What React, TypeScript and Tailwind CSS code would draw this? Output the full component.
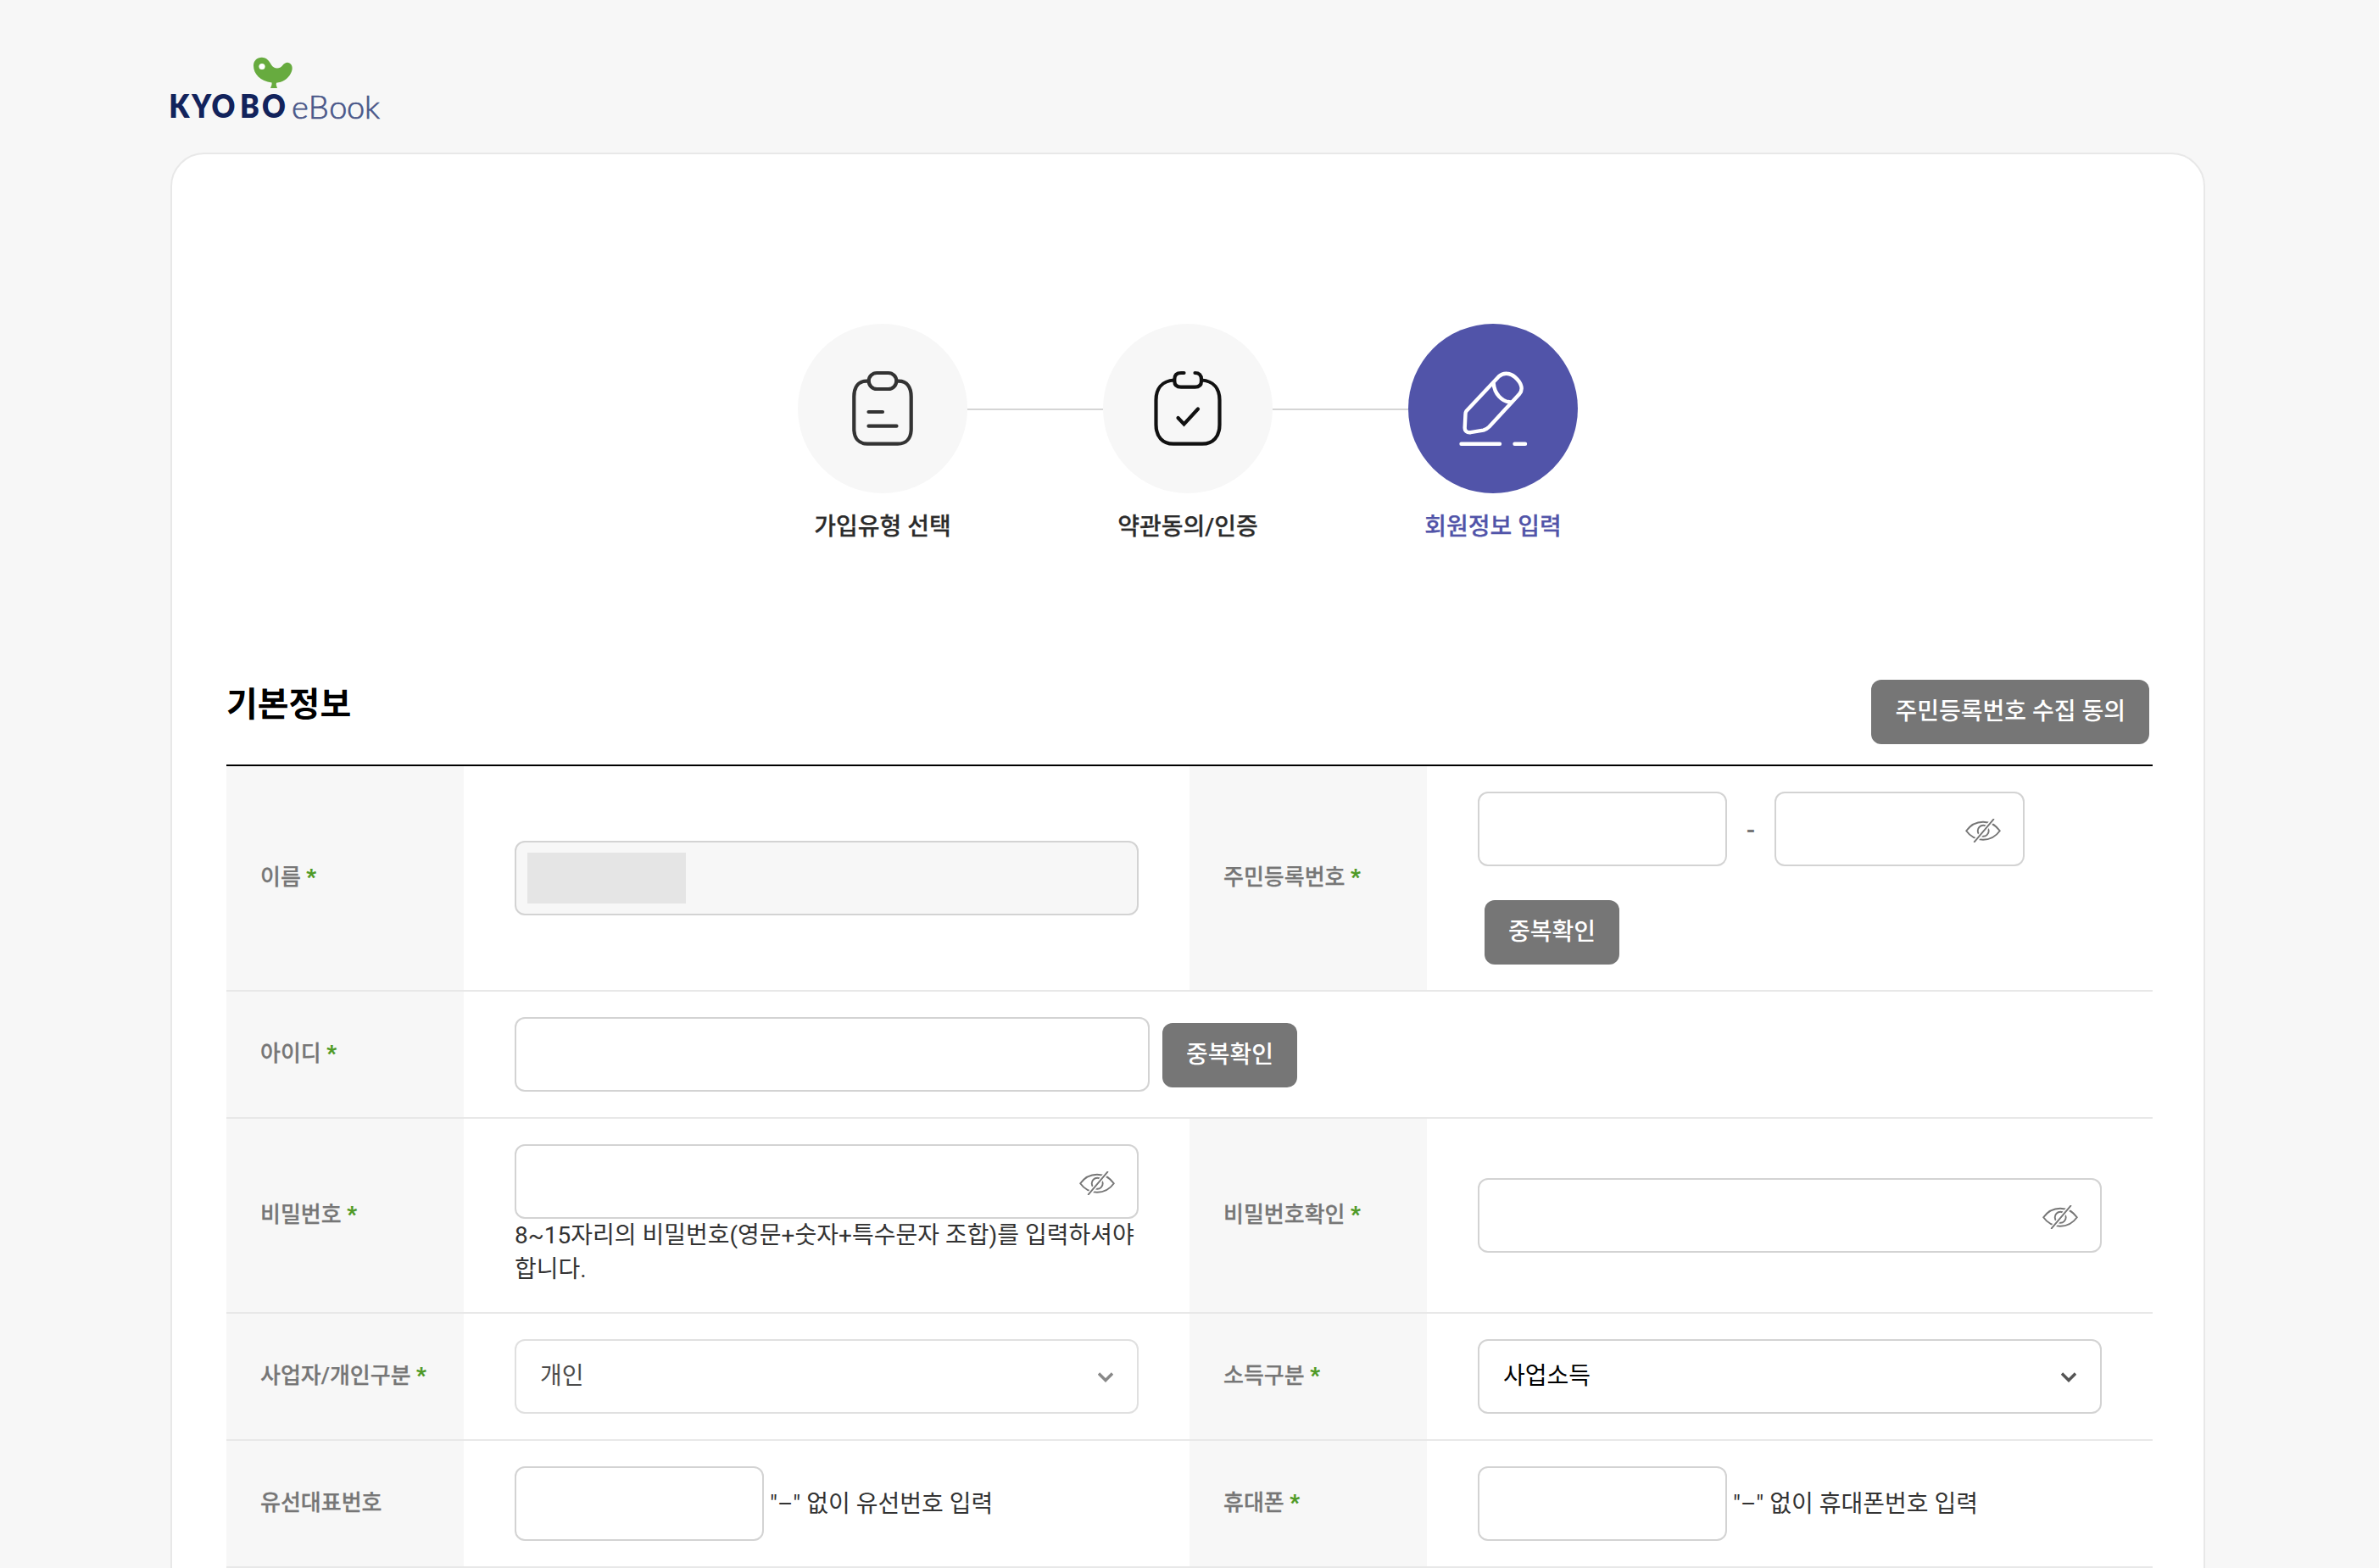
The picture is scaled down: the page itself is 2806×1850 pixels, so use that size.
import type { ReactNode } from "react";

const steps: string[] = ["가입유형 선택", "약관동의/인증", "회원정보 입력"];

function Logo() {
  return (
    <svg className="-ml-1" width="270" height="90" viewBox="-4 0 270 90">
      <path
        d="M98 10.500C98 5 102 .8 107.800 .8C113.500 .8 116.500 5 119 9.500C122 14.500 129 14.500 132 10.500C135 6.500 138 6 140.500 7.500C144.500 10 144.500 15 142 19.500C138.500 26.500 132 30 125 30.700L124.700 33L126 37H118L119.500 33L119.600 30.500C106 29 98 20 98 10.500Z"
        fill="#67ab3f"
      />
      <circle cx="108" cy="11.500" r="3.600" fill="#fff" />
      <g fontFamily="Lato, 'Open Sans', sans-serif" fontSize="38">
        <text transform="scale(0.9 1)" x="-2 28 54 91 120" y="72.500" fontWeight="800" fill="#12235c">KYOBO</text>
        <text x="143 162.700 187.300 208 229" y="72.500" fontWeight="300" fill="#4a5789" stroke="#4a5789" strokeWidth="0.700">eBook</text>
      </g>
    </svg>
  );
}

function StepIcon({ index }: { index: number }) {
  if (index === 0) {
    return (
      <svg width="96" height="96" viewBox="0 0 96 96" fill="none" stroke="#333" strokeWidth="4.200" strokeLinecap="round">
        <rect x="31.700" y="6" width="32.600" height="19" rx="9.500" />
        <path d="M31 15.700H29C19 15.700 14.300 23 14.300 34V72C14.300 83 20 89.700 30 89.700H66C76 89.700 81.700 83 81.700 72V34C81.700 23 77 15.700 67 15.700H65" />
        <path d="M31.500 52H48M31.500 68.700H64.500" />
      </svg>
    );
  }
  if (index === 1) {
    return (
      <svg width="96" height="96" viewBox="0 0 96 96" fill="none" stroke="#111" strokeWidth="4.200" strokeLinecap="round">
        <path d="M43.500 6H40Q32.300 6 32.300 13.500V15.500Q32.300 22.700 40 22.700H56.500Q64 22.700 64 15.500V13.500Q64 6 56.500 6" />
        <path d="M32 14.500C17 15.500 10.500 25 10.500 38V67C10.500 81 18 89.700 31 89.700H65C78 89.700 85.500 81 85.500 67V38C85.500 25 79 15.500 64 14.500" />
        <path d="M36.500 59L43.500 66.500L60 48.500" />
      </svg>
    );
  }
  return (
    <svg width="96" height="96" viewBox="0 0 96 96" fill="none" stroke="#fff" strokeWidth="4.400" strokeLinecap="round" strokeLinejoin="round">
      <path d="M16.500 51L55 10C60 5.500 67.500 5.500 74 11C82.500 18.500 83.500 26 79 31L43.500 69.500C41.500 71.500 39 73 36.500 73.700L21.500 76.200C17 76.700 14.500 74 14.700 70.500L15.500 54.500C15.500 53 15.800 52 16.500 51Z" />
      <path d="M48.700 18.500C49.500 30 58 40 69.700 40.700" />
      <path d="M10.500 89.700H56M73.500 89.700H86" />
    </svg>
  );
}

function EyeOff() {
  return (
    <svg className="mt-1 mr-[26px] ml-auto" width="42" height="28" viewBox="0 0 42 28" fill="none" stroke="#767676" strokeWidth="1.900">
      <path d="M1.200 14.300C6 7.500 13 3.700 21 3.700S36 7.500 40.800 14.300C36 21 29 24.700 21 24.700S6 21 1.200 14.300Z" />
      <circle cx="21.200" cy="14.300" r="6.500" />
      <path d="M33.600 .3L10.700 27.700" stroke="#fff" strokeWidth="5" />
      <path d="M33.400 .6L10.700 27.300" strokeLinecap="round" />
    </svg>
  );
}

function Chevron({ className }: { className: string }) {
  return (
    <svg className={`mt-px mr-7 ml-auto ${className}`} width="18" height="12" viewBox="0 0 18 12" fill="none" stroke="currentColor" strokeWidth="3.400">
      <path d="M1 1.500L9 9.500L17 1.500" />
    </svg>
  );
}

function Field({ className, children }: { className: string; children?: ReactNode }) {
  return (
    <div className={`flex h-[88px] shrink-0 items-center rounded-xl border-2 ${className}`}>
      {children}
    </div>
  );
}

function Button({ children }: { children: ReactNode }) {
  return (
    <button className="h-[76px] shrink-0 rounded-xl bg-[#767676] px-7 font-medium whitespace-nowrap text-white">
      {children}
    </button>
  );
}

function Label({ required = true, children }: { required?: boolean; children: ReactNode }) {
  return (
    <div className="flex w-[280px] shrink-0 items-center bg-[#f7f7f7] pb-0.5 pl-10 text-[26px] font-medium whitespace-nowrap text-[#767676] [-webkit-text-stroke:0.25px]">
      <span>
        {children}
        {required && <span className="font-bold text-[#4e9a26]"> *</span>}
      </span>
    </div>
  );
}

function Cell({ children }: { children: ReactNode }) {
  return <div className="flex w-[856px] flex-col justify-center px-[60px] py-[30px]">{children}</div>;
}

function Row({ children }: { children: ReactNode }) {
  return <div className="flex border-b-2 border-[#e8e8e8]">{children}</div>;
}

export default function App() {
  return (
    <div className="h-[1850px] overflow-hidden bg-[#f7f7f7] font-['Roboto','Noto_Sans_CJK_KR',sans-serif] text-[28px] leading-10 text-[#333]">
      <div className="ml-[201px] w-[2400px]">
        <header className="h-[180px] pt-[67px]">
          <Logo />
        </header>

        <main className="h-[1900px] rounded-[40px] border-2 border-[#e8e8e8] bg-white px-16 pt-[200px]">
          {/* 가입 단계 */}
          <ol className="flex items-start justify-center">
            {steps.map((step: string, i: number) => (
              <li key={step} className="flex">
                {i > 0 && <div className="mt-[100px] h-0.5 w-40 bg-[#d5d5d5]" />}
                <div className="w-[200px] text-center">
                  <div
                    className={`flex size-[200px] items-center justify-center rounded-full ${
                      i === 2 ? "bg-[#5154a9]" : "bg-[#f7f7f7]"
                    }`}
                  >
                    <StepIcon index={i} />
                  </div>
                  <p
                    className={`mt-5 font-medium [-webkit-text-stroke:0.25px] ${
                      i === 2 ? "text-[#5154a9]" : "text-[#2b2b2b]"
                    }`}
                  >
                    {step}
                  </p>
                </div>
              </li>
            ))}
          </ol>

          {/* 기본정보 */}
          <div className="mt-40 mb-6 flex h-[76px] items-start justify-between">
            <h2 className="text-[40px] leading-[59px] font-bold text-black">기본정보</h2>
            <Button>주민등록번호 수집 동의</Button>
          </div>

          <div className="w-[2272px] border-t-2 border-black">
            <Row>
              <Label>이름</Label>
              <Cell>
                <Field className="border-[#d3d3d3] bg-[#f7f7f7]">
                  <div className="mb-px ml-[13px] h-[60px] w-[187px] bg-[#e5e5e5]" />
                </Field>
              </Cell>
              <Label>주민등록번호</Label>
              <Cell>
                <div className="flex items-center">
                  <Field className="w-[294px] border-[#d3d3d3]" />
                  <span className="w-14 pt-1 text-center font-bold text-[#767676]">-</span>
                  <Field className="w-[295px] border-[#d3d3d3]">
                    <EyeOff />
                  </Field>
                </div>
                <div className="mt-10 ml-2">
                  <Button>중복확인</Button>
                </div>
              </Cell>
            </Row>

            <Row>
              <Label>아이디</Label>
              <div className="flex items-center gap-[15px] px-[60px] py-[30px]">
                <Field className="w-[749px] border-[#d3d3d3]" />
                <div className="pt-0.5">
                  <Button>중복확인</Button>
                </div>
              </div>
            </Row>

            <Row>
              <Label>비밀번호</Label>
              <Cell>
                <Field className="border-[#d3d3d3]">
                  <EyeOff />
                </Field>
                <p className="break-keep">8~15자리의 비밀번호(영문+숫자+특수문자 조합)를 입력하셔야 합니다.</p>
              </Cell>
              <Label>비밀번호확인</Label>
              <Cell>
                <Field className="border-[#d3d3d3]">
                  <EyeOff />
                </Field>
              </Cell>
            </Row>

            <Row>
              <Label>사업자/개인구분</Label>
              <Cell>
                <Field className="border-[#e0e0e0] pl-7 text-[#4d4d4d]">
                  개인
                  <Chevron className="text-[#888]" />
                </Field>
              </Cell>
              <Label>소득구분</Label>
              <Cell>
                <Field className="border-[#d3d3d3] pl-7 text-black">
                  사업소득
                  <Chevron className="text-[#555]" />
                </Field>
              </Cell>
            </Row>

            <Row>
              <Label required={false}>유선대표번호</Label>
              <Cell>
                <div className="flex items-center gap-[7px]">
                  <Field className="w-[294px] border-[#d3d3d3]" />
                  <span className="pt-0.5">"–" 없이 유선번호 입력</span>
                </div>
              </Cell>
              <Label>휴대폰</Label>
              <Cell>
                <div className="flex items-center gap-[7px]">
                  <Field className="w-[294px] border-[#d3d3d3]" />
                  <span className="pt-0.5">"–" 없이 휴대폰번호 입력</span>
                </div>
              </Cell>
            </Row>
          </div>
        </main>
      </div>
    </div>
  );
}
